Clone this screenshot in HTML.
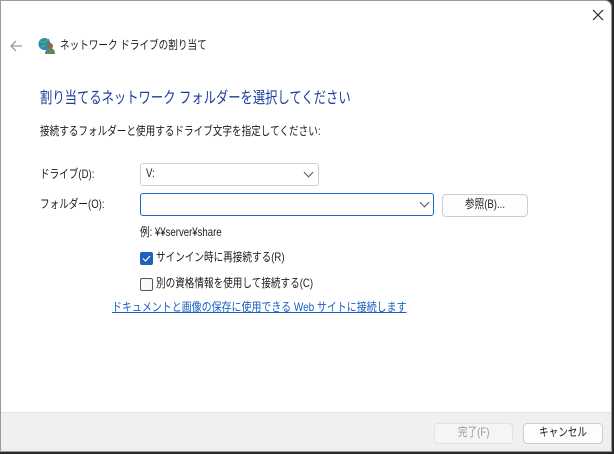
<!DOCTYPE html>
<html><head><meta charset="utf-8"><style>
*{margin:0;padding:0;box-sizing:border-box}
body{width:614px;height:454px;overflow:hidden;background:#2b2b2b;font-family:"Liberation Sans","Noto Sans CJK JP",sans-serif;font-size:12px;color:#1a1a1a}
.win{position:absolute;left:0;top:0;width:612px;height:452px;background:#fff;border:1px solid #9a9a9a;border-radius:0 7px 0 0;overflow:hidden}
.abs{position:absolute;white-space:nowrap}
.t{transform:scaleX(0.8);transform-origin:0 50%}
.footer{position:absolute;left:0;top:411px;width:612px;height:41px;background:#f0f0f0;border-top:1px solid #e3e3e3}
.combo{position:absolute;background:#fff;border:1px solid #cfcfcf;border-radius:3px}
.btn{position:absolute;border:1px solid #cdcdcd;border-radius:4px;background:#fdfdfd;text-align:center}
.btn span{display:inline-block;transform:scaleX(0.8)}
.chev{position:absolute;width:7px;height:7px;border-right:1px solid #555;border-bottom:1px solid #555;transform:rotate(45deg)}
</style></head><body>
<div class="win">
<svg class="abs" style="left:591px;top:8px" width="12" height="12"><path d="M1 1L11 11M11 1L1 11" stroke="#222" stroke-width="1.2"/></svg>
<svg class="abs" style="left:9px;top:39px" width="13" height="12"><path d="M12 6H1M6 1L1 6L6 11" stroke="#9a9a9a" stroke-width="1.3" fill="none"/></svg>
<svg class="abs" style="left:37px;top:36px" width="17" height="17"><circle cx="6.5" cy="7" r="6" fill="#2f7fd0"/><path d="M2 5c2-1 3 1 5 0s2-3 4-2M3 10c2 0 3-2 5-1" stroke="#4caf50" stroke-width="2" fill="none"/><circle cx="12" cy="9" r="3" fill="#8a6a4a"/><path d="M7 17c0-4 2-6 5-6s5 2 5 6z" fill="#5a8a5a"/></svg>
<div class="abs t" style="left:59px;top:35px">ネットワーク ドライブの割り当て</div>
<div class="abs" style="left:39px;top:83px;font-size:16px;color:#1a3f9c;transform:scaleX(0.77);transform-origin:0 50%">割り当てるネットワーク フォルダーを選択してください</div>
<div class="abs t" style="left:39px;top:121px">接続するフォルダーと使用するドライブ文字を指定してください:</div>
<div class="abs t" style="left:39px;top:164px">ドライブ(D):</div>
<div class="combo" style="left:139px;top:162px;width:179px;height:23px"><span class="abs t" style="left:5px;top:2px">V:</span><div class="chev" style="left:164px;top:5px"></div></div>
<div class="abs t" style="left:39px;top:194px">フォルダー(O):</div>
<div class="combo" style="left:139px;top:192px;width:294px;height:23px;border-color:#1f66c4"><div class="chev" style="left:280px;top:5px"></div></div>
<div class="btn" style="left:441px;top:193px;width:86px;height:23px;line-height:19px"><span>参照(B)...</span></div>
<div class="abs t" style="left:139px;top:222px">例: ¥¥server¥share</div>
<div class="abs" style="left:139px;top:251px;width:13px;height:13px;background:#1f5fbd;border-radius:2px"><svg width="13" height="13"><path d="M3 6.5l2.5 2.5L10 4" stroke="#fff" stroke-width="1.2" fill="none"/></svg></div>
<div class="abs t" style="left:155px;top:247px">サインイン時に再接続する(R)</div>
<div class="abs" style="left:139px;top:277px;width:13px;height:13px;border:1px solid #555;border-radius:2px;background:#f8f8f8"></div>
<div class="abs t" style="left:155px;top:273px">別の資格情報を使用して接続する(C)</div>
<div class="abs t" style="left:111px;top:297px;color:#1a5fc4;text-decoration:underline;transform:scaleX(0.83)">ドキュメントと画像の保存に使用できる Web サイトに接続します</div>
<div class="footer">
<div class="btn" style="left:433px;top:10px;width:79px;height:21px;line-height:17px;color:#9a9a9a;background:#f5f5f5;border-color:#e2e2e2"><span>完了(F)</span></div>
<div class="btn" style="left:522px;top:10px;width:80px;height:21px;line-height:17px"><span>キャンセル</span></div>
</div>
</div>
</body></html>
